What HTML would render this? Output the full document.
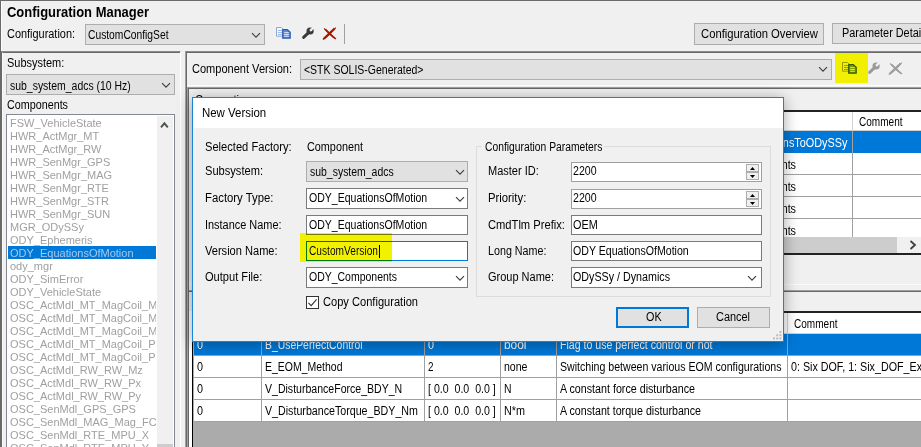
<!DOCTYPE html>
<html><head><meta charset="utf-8"><title>Configuration Manager</title>
<style>
html,body{margin:0;padding:0;}
body{width:921px;height:447px;overflow:hidden;position:relative;background:#f0f0f0;font-family:"Liberation Sans",sans-serif;}
.r{position:absolute;box-sizing:border-box;}
.t{position:absolute;white-space:pre;line-height:16px;transform-origin:0 50%;}
svg{position:absolute;overflow:visible;}
</style></head><body>
<div class="r" style="left:0px;top:0px;width:921px;height:1px;background:#696969;"></div>
<div class="r" style="left:0px;top:0px;width:1px;height:447px;background:#696969;"></div>
<div class="r" style="left:1px;top:1px;width:1px;height:447px;background:#fbfbfb;"></div>
<span class="t" style="left:7.00px;top:4.00px;font-size:14px;color:#000;font-weight:bold;transform:scaleX(0.9268);">Configuration Manager</span>
<span class="t" style="left:6.80px;top:26.00px;font-size:12px;color:#000;transform:scaleX(0.9101);">Configuration:</span>
<div class="r" style="left:85px;top:24px;width:180px;height:21px;background:#e1e1e1;border:1px solid #adadad;"></div>
<span class="t" style="left:88.00px;top:27.00px;font-size:12px;color:#000;transform:scaleX(0.8560);">CustomConfigSet</span>
<svg style="left:251px;top:31.5px" width="10" height="7" viewBox="0 0 10 7"><path d="M1 1.2 L5 5.2 L9 1.2" fill="none" stroke="#404040" stroke-width="1.15"/></svg>
<div class="r" style="left:694px;top:23px;width:130px;height:22px;background:#e1e1e1;border:1px solid #adadad;"></div>
<span class="t" style="left:701.00px;top:26.00px;font-size:12px;color:#000;transform:scaleX(0.9381);">Configuration Overview</span>
<div class="r" style="left:832px;top:23px;width:100px;height:21px;background:#e1e1e1;border:1px solid #adadad;"></div>
<span class="t" style="left:842.00px;top:25.00px;font-size:12px;color:#000;transform:scaleX(0.9059);">Parameter Details</span>
<svg style="left:276px;top:27px" width="15" height="12" viewBox="0 0 15 12">
<path d="M0.5 0.5 H5.5 L7.5 2.5 V9.2 H0.5 Z" fill="#f4f8fd" stroke="#8fa9d6" stroke-width="1"/>
<path d="M2 3.5 H6 M2 5.5 H6 M2 7.5 H6" stroke="#9fbbe6" stroke-width="1"/>
<path d="M6.7 2.7 H11.3 L14.2 5.2 V11.2 H6.7 Z" fill="#5f8fdc" stroke="#2f5cb4" stroke-width="1.2"/>
<path d="M8.2 5.6 H12.8 M8.2 7.5 H12.8 M8.2 9.3 H12.8" stroke="#e6eefb" stroke-width="0.9"/>
</svg>
<svg style="left:301.5px;top:26.5px" width="12" height="12" viewBox="0 0 12 12">
<path d="M1.6 10.4 L7.6 4.6" stroke="#3a3a3a" stroke-width="2.9" stroke-linecap="round" fill="none"/>
<circle cx="8.1" cy="4.0" r="3.6" fill="#3a3a3a"/>
<circle cx="8.9" cy="3.1" r="1.35" fill="#f0f0f0"/>
<path d="M9.2 2.8 L12 0" stroke="#f0f0f0" stroke-width="2.2" fill="none"/>
</svg>
<svg style="left:322px;top:27px" width="15" height="13" viewBox="0 0 15 13">
<path d="M13.6 0.2 C10.5 2.8 5 8 0.4 12.0 L1.6 13 C6.5 9.6 11 5 14.2 1.0 Z" fill="#a31a00"/>
<path d="M2.4 1.0 C6 4 10 8.5 14.4 11.6 L13.6 12.6 C9 9.6 5 5.6 1.8 2.0 Z" fill="#a31a00"/>
<path d="M12.6 1.6 L2.0 11.6" stroke="#a31a00" stroke-width="2.0" fill="none"/>
<path d="M3.4 2.4 L12.8 11.2" stroke="#a31a00" stroke-width="1.5" fill="none"/>
</svg>
<div class="r" style="left:344px;top:24px;width:1px;height:20px;background:#a0a0a0;"></div>
<div class="r" style="left:1px;top:51px;width:180px;height:400px;border-left:1px solid #696969;border-right:1px solid #ffffff;border-top:1px solid #8a8a8a;"></div>
<div class="r" style="left:2px;top:52px;width:178px;height:400px;border-top:1px solid #696969;border-left:1px solid #f8f8f8;"></div>
<span class="t" style="left:7.00px;top:55.00px;font-size:12px;color:#000;transform:scaleX(0.9140);">Subsystem:</span>
<div class="r" style="left:6px;top:74px;width:169px;height:21px;background:#e1e1e1;border:1px solid #adadad;"></div>
<span class="t" style="left:9.50px;top:78.00px;font-size:12px;color:#000;transform:scaleX(0.8708);">sub_system_adcs (10 Hz)</span>
<svg style="left:161px;top:82px" width="10" height="7" viewBox="0 0 10 7"><path d="M1 1.2 L5 5.2 L9 1.2" fill="none" stroke="#404040" stroke-width="1.15"/></svg>
<span class="t" style="left:7.00px;top:97.00px;font-size:12px;color:#000;transform:scaleX(0.8965);">Components</span>
<div class="r" style="left:6px;top:114px;width:169px;height:340px;background:#ffffff;border:1px solid #828790;"></div>
<div class="r" style="left:157px;top:116px;width:16px;height:332px;background:#f0f0f0;"></div>
<svg style="left:160px;top:120px" width="10" height="8" viewBox="0 0 10 8"><path d="M1.0 7.3 L4.4 3.3 L7.8 7.3" fill="none" stroke="#505050" stroke-width="1.9"/></svg>
<div class="r" style="left:157px;top:444px;width:16px;height:4px;background:#cdcdcd;"></div>
<div class="r" style="left:7px;top:115px;width:149px;height:332px;overflow:hidden">
<span class="t" style="left:3.00px;top:0.00px;font-size:11.5px;color:#a0a0a0;transform:scaleX(0.9565);">FSW_VehicleState</span>
<span class="t" style="left:3.00px;top:13.00px;font-size:11.5px;color:#a0a0a0;transform:scaleX(0.9565);">HWR_ActMgr_MT</span>
<span class="t" style="left:3.00px;top:26.00px;font-size:11.5px;color:#a0a0a0;transform:scaleX(0.9565);">HWR_ActMgr_RW</span>
<span class="t" style="left:3.00px;top:39.00px;font-size:11.5px;color:#a0a0a0;transform:scaleX(0.9565);">HWR_SenMgr_GPS</span>
<span class="t" style="left:3.00px;top:52.00px;font-size:11.5px;color:#a0a0a0;transform:scaleX(0.9565);">HWR_SenMgr_MAG</span>
<span class="t" style="left:3.00px;top:65.00px;font-size:11.5px;color:#a0a0a0;transform:scaleX(0.9565);">HWR_SenMgr_RTE</span>
<span class="t" style="left:3.00px;top:78.00px;font-size:11.5px;color:#a0a0a0;transform:scaleX(0.9565);">HWR_SenMgr_STR</span>
<span class="t" style="left:3.00px;top:91.00px;font-size:11.5px;color:#a0a0a0;transform:scaleX(0.9565);">HWR_SenMgr_SUN</span>
<span class="t" style="left:3.00px;top:104.00px;font-size:11.5px;color:#a0a0a0;transform:scaleX(0.9565);">MGR_ODySSy</span>
<span class="t" style="left:3.00px;top:117.00px;font-size:11.5px;color:#a0a0a0;transform:scaleX(0.9565);">ODY_Ephemeris</span>
<div class="r" style="left:1px;top:130.8px;width:148px;height:13px;background:#0078d7;"></div>
<span class="t" style="left:3.00px;top:130.00px;font-size:11.5px;color:#a6c8ec;transform:scaleX(0.9565);">ODY_EquationsOfMotion</span>
<span class="t" style="left:3.00px;top:143.00px;font-size:11.5px;color:#a0a0a0;transform:scaleX(0.9565);">ody_mgr</span>
<span class="t" style="left:3.00px;top:156.00px;font-size:11.5px;color:#a0a0a0;transform:scaleX(0.9565);">ODY_SimError</span>
<span class="t" style="left:3.00px;top:169.00px;font-size:11.5px;color:#a0a0a0;transform:scaleX(0.9565);">ODY_VehicleState</span>
<span class="t" style="left:3.00px;top:182.00px;font-size:11.5px;color:#a0a0a0;transform:scaleX(0.9565);">OSC_ActMdl_MT_MagCoil_MX</span>
<span class="t" style="left:3.00px;top:195.00px;font-size:11.5px;color:#a0a0a0;transform:scaleX(0.9565);">OSC_ActMdl_MT_MagCoil_MY</span>
<span class="t" style="left:3.00px;top:208.00px;font-size:11.5px;color:#a0a0a0;transform:scaleX(0.9565);">OSC_ActMdl_MT_MagCoil_MZ</span>
<span class="t" style="left:3.00px;top:221.00px;font-size:11.5px;color:#a0a0a0;transform:scaleX(0.9565);">OSC_ActMdl_MT_MagCoil_PX</span>
<span class="t" style="left:3.00px;top:234.00px;font-size:11.5px;color:#a0a0a0;transform:scaleX(0.9565);">OSC_ActMdl_MT_MagCoil_PY</span>
<span class="t" style="left:3.00px;top:247.00px;font-size:11.5px;color:#a0a0a0;transform:scaleX(0.9565);">OSC_ActMdl_RW_RW_Mz</span>
<span class="t" style="left:3.00px;top:260.00px;font-size:11.5px;color:#a0a0a0;transform:scaleX(0.9565);">OSC_ActMdl_RW_RW_Px</span>
<span class="t" style="left:3.00px;top:273.00px;font-size:11.5px;color:#a0a0a0;transform:scaleX(0.9565);">OSC_ActMdl_RW_RW_Py</span>
<span class="t" style="left:3.00px;top:286.00px;font-size:11.5px;color:#a0a0a0;transform:scaleX(0.9565);">OSC_SenMdl_GPS_GPS</span>
<span class="t" style="left:3.00px;top:299.00px;font-size:11.5px;color:#a0a0a0;transform:scaleX(0.9565);">OSC_SenMdl_MAG_Mag_FC</span>
<span class="t" style="left:3.00px;top:312.00px;font-size:11.5px;color:#a0a0a0;transform:scaleX(0.9565);">OSC_SenMdl_RTE_MPU_X</span>
<span class="t" style="left:3.00px;top:325.00px;font-size:11.5px;color:#a0a0a0;transform:scaleX(0.9565);">OSC_SenMdl_RTE_MPU_Y</span>
</div>
<div class="r" style="left:185px;top:51px;width:740px;height:400px;border-top:1px solid #8a8a8a;border-left:1px solid #a0a0a0;"></div>
<div class="r" style="left:186px;top:52px;width:740px;height:400px;border-top:1px solid #696969;border-left:1px solid #696969;"></div>
<span class="t" style="left:191.50px;top:61.00px;font-size:12px;color:#000;transform:scaleX(0.9197);">Component Version:</span>
<div class="r" style="left:300px;top:59px;width:532px;height:21px;background:#e1e1e1;border:1px solid #adadad;"></div>
<span class="t" style="left:304.00px;top:62.00px;font-size:12px;color:#000;transform:scaleX(0.8739);">&lt;STK SOLIS-Generated&gt;</span>
<svg style="left:818px;top:66px" width="10" height="7" viewBox="0 0 10 7"><path d="M1 1.2 L5 5.2 L9 1.2" fill="none" stroke="#404040" stroke-width="1.15"/></svg>
<svg style="left:842px;top:62px" width="15" height="12" viewBox="0 0 15 12">
<path d="M0.5 0.5 H5.5 L7.5 2.5 V9.2 H0.5 Z" fill="#f4f8fd" stroke="#9a9ac0" stroke-width="1"/>
<path d="M2 3.5 H6 M2 5.5 H6 M2 7.5 H6" stroke="#9a9ad0" stroke-width="1"/>
<path d="M6.7 2.7 H11.3 L14.2 5.2 V11.2 H6.7 Z" fill="#7fa0e0" stroke="#36589e" stroke-width="1.2"/>
<path d="M8.2 5.6 H12.8 M8.2 7.5 H12.8 M8.2 9.3 H12.8" stroke="#eef4ff" stroke-width="0.9"/>
</svg>
<div class="r" style="left:835px;top:53px;width:33px;height:30px;background:#f2f200;mix-blend-mode:darken;"></div>
<svg style="left:867.8px;top:61.5px" width="12" height="12" viewBox="0 0 12 12">
<path d="M1.6 10.4 L7.6 4.6" stroke="#9a9a9a" stroke-width="2.9" stroke-linecap="round" fill="none"/>
<circle cx="8.1" cy="4.0" r="3.6" fill="#9a9a9a"/>
<circle cx="8.9" cy="3.1" r="1.35" fill="#f0f0f0"/>
<path d="M9.2 2.8 L12 0" stroke="#f0f0f0" stroke-width="2.2" fill="none"/>
</svg>
<svg style="left:888px;top:62px" width="15" height="13" viewBox="0 0 15 13">
<path d="M13.6 0.2 C10.5 2.8 5 8 0.4 12.0 L1.6 13 C6.5 9.6 11 5 14.2 1.0 Z" fill="#9c9c9c"/>
<path d="M2.4 1.0 C6 4 10 8.5 14.4 11.6 L13.6 12.6 C9 9.6 5 5.6 1.8 2.0 Z" fill="#9c9c9c"/>
<path d="M12.6 1.6 L2.0 11.6" stroke="#9c9c9c" stroke-width="2.0" fill="none"/>
<path d="M3.4 2.4 L12.8 11.2" stroke="#9c9c9c" stroke-width="1.5" fill="none"/>
</svg>
<div class="r" style="left:187px;top:85px;width:740px;height:1px;background:#ffffff;"></div>
<div class="r" style="left:187px;top:87px;width:740px;height:400px;border-top:1px solid #a0a0a0;border-left:1px solid #a0a0a0;"></div>
<div class="r" style="left:188px;top:88px;width:740px;height:400px;border-top:1px solid #696969;border-left:1px solid #696969;"></div>
<span class="t" style="left:195.00px;top:92.00px;font-size:12px;color:#000;transform:scaleX(0.9294);">Connections</span>
<div class="r" style="left:192px;top:110px;width:740px;height:145px;background:#ababab;border:1px solid #000;border-top:2px solid #222;border-bottom:2px solid #222;"></div>
<div class="r" style="left:194px;top:112px;width:730px;height:19px;background:#ffffff;border-bottom:1px solid #d0d0d0;"></div>
<div class="r" style="left:852px;top:112px;width:1px;height:19px;background:#d0d0d0;"></div>
<span class="t" style="left:859.00px;top:114.00px;font-size:12px;color:#000;transform:scaleX(0.8363);">Comment</span>
<div class="r" style="left:194px;top:131px;width:730px;height:22px;background:#0078d7;"></div>
<span class="t" style="left:734.10px;top:135.00px;font-size:12px;color:#fff;transform:scaleX(0.9044);">ConnectionsToODySSy</span>
<div class="r" style="left:194px;top:153px;width:730px;height:22px;background:#ffffff;border-bottom:1px solid #a0a0a0;"></div>
<span class="t" style="left:735.00px;top:157.00px;font-size:12px;color:#000;transform:scaleX(0.8965);">Components</span>
<div class="r" style="left:194px;top:175px;width:730px;height:22px;background:#ffffff;border-bottom:1px solid #a0a0a0;"></div>
<span class="t" style="left:735.00px;top:179.00px;font-size:12px;color:#000;transform:scaleX(0.8965);">Components</span>
<div class="r" style="left:194px;top:197px;width:730px;height:22px;background:#ffffff;border-bottom:1px solid #a0a0a0;"></div>
<span class="t" style="left:735.00px;top:201.00px;font-size:12px;color:#000;transform:scaleX(0.8965);">Components</span>
<div class="r" style="left:194px;top:219px;width:730px;height:22px;background:#ffffff;border-bottom:1px solid #a0a0a0;"></div>
<span class="t" style="left:735.00px;top:223.00px;font-size:12px;color:#000;transform:scaleX(0.8965);">Components</span>
<div class="r" style="left:852px;top:131px;width:1px;height:106px;background:#a0a0a0;"></div>
<div class="r" style="left:194px;top:237px;width:730px;height:16px;background:#f0f0f0;"></div>
<div class="r" style="left:211px;top:237px;width:686px;height:16px;background:#cdcdcd;"></div>
<svg style="left:909px;top:240px" width="8" height="10" viewBox="0 0 8 10"><path d="M1.5 1 L6 5 L1.5 9" fill="none" stroke="#404040" stroke-width="1.8"/></svg>
<div class="r" style="left:189px;top:284px;width:740px;height:1px;background:#fbfbfb;"></div>
<div class="r" style="left:189px;top:290px;width:740px;height:1px;background:#a0a0a0;"></div>
<div class="r" style="left:189px;top:291px;width:740px;height:1px;background:#696969;"></div>
<div class="r" style="left:189px;top:311px;width:3px;height:160px;background:#ffffff;"></div>
<div class="r" style="left:192px;top:311px;width:740px;height:140px;background:#ababab;border:1px solid #000;border-top:2px solid #222;"></div>
<div class="r" style="left:194px;top:313px;width:730px;height:21px;background:#ffffff;border-bottom:1px solid #d0d0d0;"></div>
<div class="r" style="left:261px;top:313px;width:1px;height:21px;background:#d0d0d0;"></div>
<div class="r" style="left:424px;top:313px;width:1px;height:21px;background:#d0d0d0;"></div>
<div class="r" style="left:500px;top:313px;width:1px;height:21px;background:#d0d0d0;"></div>
<div class="r" style="left:556px;top:313px;width:1px;height:21px;background:#d0d0d0;"></div>
<div class="r" style="left:787px;top:313px;width:1px;height:21px;background:#d0d0d0;"></div>
<span class="t" style="left:794.10px;top:316.00px;font-size:12px;color:#000;transform:scaleX(0.8363);">Comment</span>
<div class="r" style="left:194px;top:334px;width:730px;height:22px;background:#0078d7;border-bottom:1px solid #a0a0a0;"></div>
<span class="t" style="left:197.30px;top:337.00px;font-size:12px;color:#fff;transform:scaleX(0.8990);">0</span>
<span class="t" style="left:265.40px;top:337.00px;font-size:12px;color:#fff;transform:scaleX(0.8659);">B_UsePerfectControl</span>
<span class="t" style="left:428.00px;top:337.00px;font-size:12px;color:#fff;transform:scaleX(0.8990);">0</span>
<span class="t" style="left:504.00px;top:337.00px;font-size:12px;color:#fff;transform:scaleX(0.9917);">bool</span>
<span class="t" style="left:560.00px;top:337.00px;font-size:12px;color:#fff;transform:scaleX(0.8827);">Flag to use perfect control or not</span>
<div class="r" style="left:194px;top:356px;width:730px;height:22px;background:#ffffff;border-bottom:1px solid #a0a0a0;"></div>
<span class="t" style="left:197.30px;top:359.00px;font-size:12px;color:#000;transform:scaleX(0.8990);">0</span>
<span class="t" style="left:265.40px;top:359.00px;font-size:12px;color:#000;transform:scaleX(0.8736);">E_EOM_Method</span>
<span class="t" style="left:428.00px;top:359.00px;font-size:12px;color:#000;transform:scaleX(0.8241);">2</span>
<span class="t" style="left:504.00px;top:359.00px;font-size:12px;color:#000;transform:scaleX(0.8803);">none</span>
<span class="t" style="left:560.00px;top:359.00px;font-size:12px;color:#000;transform:scaleX(0.8832);">Switching between various EOM configurations</span>
<span class="t" style="left:791.20px;top:359.00px;font-size:12px;color:#000;transform:scaleX(0.8929);">0: Six DOF, 1: Six_DOF_Extended</span>
<div class="r" style="left:194px;top:378px;width:730px;height:22px;background:#ffffff;border-bottom:1px solid #a0a0a0;"></div>
<span class="t" style="left:197.30px;top:381.00px;font-size:12px;color:#000;transform:scaleX(0.8990);">0</span>
<span class="t" style="left:265.40px;top:381.00px;font-size:12px;color:#000;transform:scaleX(0.8791);">V_DisturbanceForce_BDY_N</span>
<span class="t" style="left:428.00px;top:381.00px;font-size:12px;color:#000;transform:scaleX(0.8838);">[ 0.0  0.0  0.0 ]</span>
<span class="t" style="left:504.00px;top:381.00px;font-size:12px;color:#000;transform:scaleX(0.8654);">N</span>
<span class="t" style="left:560.00px;top:381.00px;font-size:12px;color:#000;transform:scaleX(0.8915);">A constant force disturbance</span>
<div class="r" style="left:194px;top:400px;width:730px;height:22px;background:#ffffff;border-bottom:1px solid #a0a0a0;"></div>
<span class="t" style="left:197.30px;top:403.00px;font-size:12px;color:#000;transform:scaleX(0.8990);">0</span>
<span class="t" style="left:265.40px;top:403.00px;font-size:12px;color:#000;transform:scaleX(0.8885);">V_DisturbanceTorque_BDY_Nm</span>
<span class="t" style="left:428.00px;top:403.00px;font-size:12px;color:#000;transform:scaleX(0.8838);">[ 0.0  0.0  0.0 ]</span>
<span class="t" style="left:504.00px;top:403.00px;font-size:12px;color:#000;transform:scaleX(0.9000);">N*m</span>
<span class="t" style="left:560.00px;top:403.00px;font-size:12px;color:#000;transform:scaleX(0.8881);">A constant torque disturbance</span>
<div class="r" style="left:261px;top:334px;width:1px;height:88px;background:#a0a0a0;"></div>
<div class="r" style="left:424px;top:334px;width:1px;height:88px;background:#a0a0a0;"></div>
<div class="r" style="left:500px;top:334px;width:1px;height:88px;background:#a0a0a0;"></div>
<div class="r" style="left:556px;top:334px;width:1px;height:88px;background:#a0a0a0;"></div>
<div class="r" style="left:787px;top:334px;width:1px;height:88px;background:#a0a0a0;"></div>
<div class="r" style="left:192px;top:97px;width:592px;height:245px;background:#f0f0f0;border:1px solid #1883d7;box-shadow:0 2px 14px rgba(0,0,0,0.35);"></div>
<div class="r" style="left:193px;top:98px;width:590px;height:29.5px;background:#ffffff;"></div>
<span class="t" style="left:201.60px;top:105.00px;font-size:12px;color:#000;transform:scaleX(0.9530);">New Version</span>
<span class="t" style="left:205.20px;top:139.00px;font-size:12px;color:#000;transform:scaleX(0.9274);">Selected Factory:</span>
<span class="t" style="left:307.10px;top:139.00px;font-size:12px;color:#000;transform:scaleX(0.9027);">Component</span>
<span class="t" style="left:205.20px;top:163.00px;font-size:12px;color:#000;transform:scaleX(0.9252);">Subsystem:</span>
<div class="r" style="left:306px;top:161px;width:162px;height:21px;background:#e1e1e1;border:1px solid #adadad;"></div>
<span class="t" style="left:309.80px;top:164.00px;font-size:12px;color:#000;transform:scaleX(0.8714);">sub_system_adcs</span>
<svg style="left:454.5px;top:168.5px" width="10" height="7" viewBox="0 0 10 7"><path d="M1 1.2 L5 5.2 L9 1.2" fill="none" stroke="#404040" stroke-width="1.15"/></svg>
<span class="t" style="left:205.20px;top:190.00px;font-size:12px;color:#000;transform:scaleX(0.9438);">Factory Type:</span>
<div class="r" style="left:306px;top:188px;width:162px;height:21px;background:#ffffff;border:1px solid #7a7a7a;"></div>
<span class="t" style="left:308.80px;top:190.00px;font-size:12px;color:#000;transform:scaleX(0.8773);">ODY_EquationsOfMotion</span>
<svg style="left:454.5px;top:195.5px" width="10" height="7" viewBox="0 0 10 7"><path d="M1 1.2 L5 5.2 L9 1.2" fill="none" stroke="#404040" stroke-width="1.15"/></svg>
<span class="t" style="left:205.20px;top:217.00px;font-size:12px;color:#000;transform:scaleX(0.9103);">Instance Name:</span>
<div class="r" style="left:306px;top:215px;width:162px;height:20px;background:#ffffff;border:1px solid #7a7a7a;"></div>
<span class="t" style="left:308.80px;top:217.00px;font-size:12px;color:#000;transform:scaleX(0.8773);">ODY_EquationsOfMotion</span>
<span class="t" style="left:205.20px;top:243.00px;font-size:12px;color:#000;transform:scaleX(0.9224);">Version Name:</span>
<div class="r" style="left:306px;top:241px;width:162px;height:20px;background:#ffffff;border:1px solid #0078d7;"></div>
<span class="t" style="left:308.80px;top:243.00px;font-size:12px;color:#000;transform:scaleX(0.8480);">CustomVersion</span>
<div class="r" style="left:379px;top:245px;width:1px;height:12.5px;background:#000;"></div>
<span class="t" style="left:205.20px;top:269.00px;font-size:12px;color:#000;transform:scaleX(0.9238);">Output File:</span>
<div class="r" style="left:306px;top:267px;width:162px;height:21px;background:#ffffff;border:1px solid #7a7a7a;"></div>
<span class="t" style="left:308.80px;top:269.00px;font-size:12px;color:#000;transform:scaleX(0.8737);">ODY_Components</span>
<svg style="left:454.5px;top:274.5px" width="10" height="7" viewBox="0 0 10 7"><path d="M1 1.2 L5 5.2 L9 1.2" fill="none" stroke="#404040" stroke-width="1.15"/></svg>
<div class="r" style="left:306px;top:296px;width:13px;height:13px;background:#ffffff;border:1px solid #333;"></div>
<svg style="left:306px;top:296px" width="13" height="13" viewBox="0 0 13 13"><path d="M2.4 6.8 L5.2 9.6 L10.6 3.4" fill="none" stroke="#333" stroke-width="1.1"/></svg>
<span class="t" style="left:323.40px;top:294.00px;font-size:12px;color:#000;transform:scaleX(0.9248);">Copy Configuration</span>
<div class="r" style="left:476px;top:146px;width:295px;height:150.5px;border:1px solid #dcdcdc;"></div>
<div class="r" style="left:482px;top:140px;width:122px;height:14px;background:#f0f0f0;"></div>
<span class="t" style="left:484.60px;top:139.00px;font-size:12px;color:#000;transform:scaleX(0.8586);">Configuration Parameters</span>
<span class="t" style="left:488.00px;top:163.00px;font-size:12px;color:#000;transform:scaleX(0.9179);">Master ID:</span>
<span class="t" style="left:488.00px;top:190.00px;font-size:12px;color:#000;transform:scaleX(0.9417);">Priority:</span>
<span class="t" style="left:488.00px;top:217.00px;font-size:12px;color:#000;transform:scaleX(0.9302);">CmdTlm Prefix:</span>
<span class="t" style="left:488.00px;top:243.00px;font-size:12px;color:#000;transform:scaleX(0.8933);">Long Name:</span>
<span class="t" style="left:488.00px;top:269.00px;font-size:12px;color:#000;transform:scaleX(0.9163);">Group Name:</span>
<div class="r" style="left:571px;top:161.5px;width:191px;height:20.5px;background:#ffffff;border:1px solid #a0a0a0;"></div>
<div class="r" style="left:746px;top:164.0px;width:13px;height:7.5px;background:#f0f0f0;border:1px solid #adadad;"></div>
<div class="r" style="left:746px;top:172.0px;width:13px;height:7.5px;background:#f0f0f0;border:1px solid #adadad;"></div>
<svg style="left:750px;top:166.5px" width="5" height="3" viewBox="0 0 5 3"><path d="M0 3 L2.5 0 L5 3 Z" fill="#000"/></svg>
<svg style="left:750px;top:174.5px" width="5" height="3" viewBox="0 0 5 3"><path d="M0 0 L2.5 3 L5 0 Z" fill="#000"/></svg>
<span class="t" style="left:573.20px;top:163.00px;font-size:12px;color:#000;transform:scaleX(0.8840);">2200</span>
<div class="r" style="left:571px;top:188.5px;width:191px;height:20.5px;background:#ffffff;border:1px solid #a0a0a0;"></div>
<div class="r" style="left:746px;top:191.0px;width:13px;height:7.5px;background:#f0f0f0;border:1px solid #adadad;"></div>
<div class="r" style="left:746px;top:199.0px;width:13px;height:7.5px;background:#f0f0f0;border:1px solid #adadad;"></div>
<svg style="left:750px;top:193.5px" width="5" height="3" viewBox="0 0 5 3"><path d="M0 3 L2.5 0 L5 3 Z" fill="#000"/></svg>
<svg style="left:750px;top:201.5px" width="5" height="3" viewBox="0 0 5 3"><path d="M0 0 L2.5 3 L5 0 Z" fill="#000"/></svg>
<span class="t" style="left:573.20px;top:190.00px;font-size:12px;color:#000;transform:scaleX(0.8840);">2200</span>
<div class="r" style="left:571px;top:214.5px;width:191px;height:20.5px;background:#ffffff;border:1px solid #7a7a7a;"></div>
<span class="t" style="left:573.20px;top:217.00px;font-size:12px;color:#000;transform:scaleX(0.9036);">OEM</span>
<div class="r" style="left:571px;top:241px;width:191px;height:20px;background:#ffffff;border:1px solid #7a7a7a;"></div>
<span class="t" style="left:573.20px;top:243.00px;font-size:12px;color:#000;transform:scaleX(0.8820);">ODY EquationsOfMotion</span>
<div class="r" style="left:571px;top:267px;width:191px;height:21px;background:#ffffff;border:1px solid #7a7a7a;"></div>
<span class="t" style="left:573.20px;top:269.00px;font-size:12px;color:#000;transform:scaleX(0.8925);">ODySSy / Dynamics</span>
<svg style="left:747px;top:274.5px" width="10" height="7" viewBox="0 0 10 7"><path d="M1 1.2 L5 5.2 L9 1.2" fill="none" stroke="#404040" stroke-width="1.15"/></svg>
<div class="r" style="left:616px;top:307px;width:73px;height:21px;background:#e1e1e1;border:2px solid #0078d7;"></div>
<span class="t" style="left:645.50px;top:309.00px;font-size:12px;color:#000;transform:scaleX(0.8998);">OK</span>
<div class="r" style="left:697px;top:307px;width:73px;height:21px;background:#e1e1e1;border:1px solid #adadad;"></div>
<span class="t" style="left:716.00px;top:309.00px;font-size:12px;color:#000;transform:scaleX(0.9102);">Cancel</span>
<svg style="left:773px;top:331px" width="10" height="10" viewBox="0 0 10 10"><rect x="6.4" y="0" width="2" height="2" fill="#bdbdbd"/><rect x="6.4" y="3.2" width="2" height="2" fill="#bdbdbd"/><rect x="6.4" y="6.4" width="2" height="2" fill="#bdbdbd"/><rect x="3.2" y="3.2" width="2" height="2" fill="#bdbdbd"/><rect x="3.2" y="6.4" width="2" height="2" fill="#bdbdbd"/><rect x="0" y="6.4" width="2" height="2" fill="#bdbdbd"/></svg>
<div class="r" style="left:300px;top:233px;width:92px;height:29px;background:#f2f200;mix-blend-mode:darken;"></div>
</body></html>
